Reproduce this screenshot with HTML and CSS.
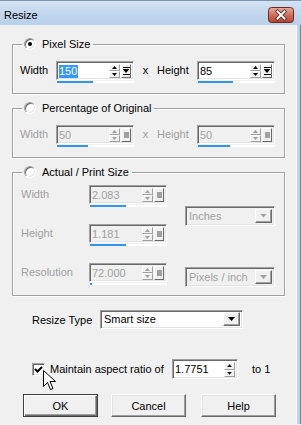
FILE: index.html
```html
<!DOCTYPE html>
<html>
<head>
  <meta charset="UTF-8">
  <title>Resize</title>
  <link rel="stylesheet" href="styles.css">
</head>
<body>
  <div class="window">
    <div class="titlebar">
      <span class="title">Resize</span>
      <span class="close-btn">
        <svg width="26" height="16" viewBox="0 0 26 16">
          <defs>
            <linearGradient id="closeGrad" x1="0" y1="0" x2="0" y2="1">
              <stop offset="0" stop-color="#e9a99c"/>
              <stop offset="0.5" stop-color="#d0705e"/>
              <stop offset="1" stop-color="#b8402c"/>
            </linearGradient>
          </defs>
          <rect x="0.5" y="0.5" width="25" height="15" rx="3" fill="url(#closeGrad)" stroke="#6b2a22"/>
          <path d="M9.5 4.5l7 7m0-7l-7 7" stroke="#4a2a26" stroke-width="3.6" stroke-linecap="square"/>
          <path d="M9.5 4.5l7 7m0-7l-7 7" stroke="#fff" stroke-width="2" stroke-linecap="square"/>
        </svg>
      </span>
    </div>

    <div class="client">
      <!-- Pixel size -->
      <div class="group">
        <div class="group-title"><span class="radio checked"></span><span>Pixel Size</span></div>
        <div class="size-row">
          <span class="lbl">Width</span>
          <div class="spin">
            <div class="spin-box">
              <span class="spin-text"><span class="sel">150</span></span>
              <span class="arrows"><span class="arrow up"></span><span class="arrow down"></span></span>
              <span class="spin-btn"><span class="jump"></span></span>
            </div>
            <div class="track"><div class="track-fill" style="width:36px"></div></div>
          </div>
          <span class="times">x</span>
          <span class="lbl lbl-h">Height</span>
          <div class="spin">
            <div class="spin-box">
              <span class="spin-text">85</span>
              <span class="arrows"><span class="arrow up"></span><span class="arrow down"></span></span>
              <span class="spin-btn"><span class="jump"></span></span>
            </div>
            <div class="track"><div class="track-fill" style="width:35px"></div></div>
          </div>
        </div>
      </div>

      <!-- Percentage -->
      <div class="group disabled">
        <div class="group-title"><span class="radio"></span><span class="enabled-text">Percentage of Original</span></div>
        <div class="size-row">
          <span class="lbl">Width</span>
          <div class="spin">
            <div class="spin-box">
              <span class="spin-text">50</span>
              <span class="arrows"><span class="arrow up"></span><span class="arrow down"></span></span>
              <span class="spin-btn"><span class="jump"></span></span>
            </div>
            <div class="track"><div class="track-fill" style="width:31px"></div></div>
          </div>
          <span class="times">x</span>
          <span class="lbl lbl-h">Height</span>
          <div class="spin">
            <div class="spin-box">
              <span class="spin-text">50</span>
              <span class="arrows"><span class="arrow up"></span><span class="arrow down"></span></span>
              <span class="spin-btn"><span class="jump"></span></span>
            </div>
            <div class="track"><div class="track-fill" style="width:32px"></div></div>
          </div>
        </div>
      </div>

      <!-- Actual / print size -->
      <div class="group disabled">
        <div class="group-title"><span class="radio"></span><span class="enabled-text">Actual / Print Size</span></div>
        <div class="print-grid">
          <span class="lbl">Width</span>
          <div class="spin">
            <div class="spin-box">
              <span class="spin-text">2.083</span>
              <span class="arrows"><span class="arrow up"></span><span class="arrow down"></span></span>
              <span class="spin-btn"><span class="jump"></span></span>
            </div>
            <div class="track"><div class="track-fill" style="width:36px"></div></div>
          </div>
          <div class="select unit-select">
            <span class="select-text">Inches</span>
            <span class="select-btn"><span class="tri"></span></span>
          </div>

          <span class="lbl">Height</span>
          <div class="spin">
            <div class="spin-box">
              <span class="spin-text">1.181</span>
              <span class="arrows"><span class="arrow up"></span><span class="arrow down"></span></span>
              <span class="spin-btn"><span class="jump"></span></span>
            </div>
            <div class="track"><div class="track-fill" style="width:36px"></div></div>
          </div>

          <span class="lbl">Resolution</span>
          <div class="spin">
            <div class="spin-box">
              <span class="spin-text">72.000</span>
              <span class="arrows"><span class="arrow up"></span><span class="arrow down"></span></span>
              <span class="spin-btn"><span class="jump"></span></span>
            </div>
            <div class="track"><div class="track-fill" style="width:2px"></div></div>
          </div>
          <div class="select res-select">
            <span class="select-text">Pixels / inch</span>
            <span class="select-btn"><span class="tri"></span></span>
          </div>
        </div>
      </div>

      <div class="type-row">
        <span class="type-lbl">Resize Type</span>
        <div class="select type-select">
          <span class="select-text">Smart size</span>
          <span class="select-btn"><span class="tri"></span></span>
        </div>
      </div>

      <div class="aspect-row">
        <span class="checkbox">
          <svg width="9" height="9" viewBox="0 0 9 9"><path d="M1 4l2.5 2.5L8 2" stroke="#000" stroke-width="2" fill="none"/></svg>
        </span>
        <span class="aspect-lbl">Maintain aspect ratio of</span>
        <div class="spin-box ratio-box">
          <span class="spin-text">1.7751</span>
          <span class="arrows"><span class="arrow up"></span><span class="arrow down"></span></span>
        </div>
        <span class="to-one">to 1</span>
      </div>

      <div class="button-row">
        <button class="btn default">OK</button>
        <button class="btn">Cancel</button>
        <button class="btn help">Help</button>
      </div>
    </div>

    <svg class="cursor" width="13" height="21" viewBox="0 0 13 21">
      <path d="M0.5 0.5v16l4-4 3 7 2.5-1-3-7h5.5z" fill="#fff" stroke="#000" stroke-linejoin="miter"/>
    </svg>
  </div>
</body>
</html>
```

FILE: styles.css
```css
* {
  box-sizing: border-box;
}

body {
  margin: 0;
  padding: 0;
  background: #f0f0f0;
  font-family: 'Liberation Sans', Arial, sans-serif;
  font-size: 11px;
  color: #000;
}

.window {
  width: 301px;
  height: 425px;
  position: relative;
  overflow: hidden;
  background: #f0f0f0;
}

/* Title bar */
.titlebar {
  height: 25px;
  display: flex;
  align-items: flex-start;
  justify-content: space-between;
  padding: 0 7px 0 4px;
  border-top: 1px solid #7f93aa;
  background: linear-gradient(180deg, #d3e3f4 0%, #c0d5ec 60%, #b9d0ea 100%);
}

.title {
  font-size: 11px;
  line-height: 12px;
  margin-top: 8px;
}

.close-btn {
  display: flex;
  margin-top: 6px;
}

/* Client area */
.client {
  height: 399px;
  padding: 19px 12px 0 12px;
  border-right: 4px solid #bed3ea;
  box-shadow: inset -1px 0 0 #fff;
  position: relative;
}

.client::after {
  content: '';
  position: absolute;
  top: 0;
  right: -4px;
  width: 1px;
  height: 100%;
  background: #6f8397;
}

/* Group boxes */
.group {
  border: 1px solid #a0a0a0;
  box-shadow: 1px 1px 0 #fff, inset 1px 1px 0 #fff;
  padding: 0 0 10px 7px;
  margin-bottom: 14px;
}

.group-title {
  display: flex;
  align-items: center;
  gap: 6px;
  width: max-content;
  height: 14px;
  margin: -8px 0 0 2px;
  padding: 0 3px 0 2px;
  background: #f0f0f0;
}

.radio {
  width: 12px;
  height: 12px;
  border-radius: 50%;
  background: #fff;
  border: 1px solid;
  border-color: #a0a0a0 #fff #fff #a0a0a0;
  box-shadow: inset 1px 1px 0 #696969, inset -1px -1px 0 #e3e3e3;
  display: flex;
  align-items: center;
  justify-content: center;
}

.radio.checked::after {
  content: '';
  width: 4px;
  height: 4px;
  border-radius: 50%;
  background: #000;
}

.size-row {
  display: flex;
  align-items: flex-start;
  margin-top: 10px;
}

.lbl {
  width: 36px;
  line-height: 19px;
}

.lbl-h {
  width: 40px;
}

.times {
  width: 23px;
  text-align: center;
  line-height: 19px;
}

.disabled .lbl,
.disabled .times,
.disabled .spin-text {
  color: #a0a0a0;
}

.disabled .spin-text,
.disabled .select {
  background: #f0f0f0;
}

/* Spin edit */
.spin {
  width: 78px;
  display: flex;
  flex-direction: column;
}

.spin-box {
  height: 19px;
  display: flex;
  align-items: stretch;
  border: 1px solid;
  border-color: #a0a0a0 #fff #fff #a0a0a0;
  box-shadow: inset 1px 1px 0 #696969, inset -1px -1px 0 #e3e3e3;
  padding: 2px 2px 1px 2px;
  background: #fff;
}

.disabled .spin-box {
  background: #f0f0f0;
}

.spin-text {
  flex: 1;
  line-height: 14px;
  padding-left: 0;
  background: #fff;
}

.sel {
  background: #3399ff;
  color: #fff;
  padding: 0 1px 1px 0;
}

.arrows {
  width: 11px;
  display: flex;
  flex-direction: column;
}

.arrow {
  flex: 1;
  display: flex;
  align-items: center;
  justify-content: center;
  border: 1px solid;
  border-color: #fff #a0a0a0 #a0a0a0 #fff;
  background: #f0f0f0;
}

.arrow::after {
  content: '';
  width: 5px;
  height: 3px;
  background: #000;
  clip-path: polygon(50% 0, 100% 100%, 0 100%);
}

.arrow.down::after {
  clip-path: polygon(0 0, 100% 0, 50% 100%);
}

.disabled .arrow::after {
  background: #a0a0a0;
}

.spin-btn {
  width: 10px;
  margin-left: 1px;
  display: flex;
  align-items: center;
  justify-content: center;
  border: 1px solid;
  border-color: #fff #696969 #696969 #fff;
  background: #f0f0f0;
}

.jump {
  width: 7px;
  height: 8px;
  background:
    linear-gradient(#000, #000) top / 7px 1px no-repeat,
    linear-gradient(#000, #000) bottom / 7px 1px no-repeat;
  position: relative;
}

.jump::after {
  content: '';
  position: absolute;
  left: 0;
  top: 2px;
  width: 7px;
  height: 4px;
  background: #000;
  clip-path: polygon(0 0, 100% 0, 50% 100%);
}

.disabled .jump {
  width: 5px;
  height: 6px;
  background: #a0a0a0;
}

.disabled .jump::after {
  display: none;
}

.track {
  height: 2px;
  margin: 1px 0 0 1px;
  background: #fff;
}

.track-fill {
  height: 2px;
  background: #3396ec;
}

/* Print size grid */
.print-grid {
  display: grid;
  grid-template-columns: 68px 96px 90px;
  grid-auto-rows: 22px;
  row-gap: 17px;
  margin-top: 6px;
  padding-left: 1px;
}

.print-grid .lbl {
  width: auto;
}

.unit-select {
  grid-column: 3;
  grid-row: 1 / span 2;
  align-self: center;
}

.res-select {
  grid-column: 3;
  margin-top: 4px;
}

/* Combo box */
.select {
  height: 20px;
  display: flex;
  border: 1px solid;
  border-color: #a0a0a0 #fff #fff #a0a0a0;
  box-shadow: inset 1px 1px 0 #696969, inset -1px -1px 0 #e3e3e3;
  padding: 2px;
  background: #fff;
}

.select-text {
  flex: 1;
  line-height: 15px;
  padding-left: 1px;
}

.disabled .select-text {
  color: #a0a0a0;
}

.select-btn {
  width: 17px;
  display: flex;
  align-items: center;
  justify-content: center;
  border: 1px solid;
  border-color: #fff #696969 #696969 #fff;
  box-shadow: inset -1px -1px 0 #a0a0a0;
  background: #f0f0f0;
}

.tri {
  width: 7px;
  height: 4px;
  background: #000;
  clip-path: polygon(0 0, 100% 0, 50% 100%);
}

.disabled .tri {
  background: #a0a0a0;
}

/* Resize type */
.type-row {
  display: flex;
  align-items: center;
  margin: 0 0 0 20px;
}

.type-lbl {
  width: 68px;
}

.type-select {
  width: 143px;
  height: 19px;
  padding: 1px 2px 2px 2px;
}

/* Aspect ratio */
.aspect-row {
  display: flex;
  align-items: center;
  margin: 30px 0 0 20px;
}

.checkbox {
  width: 13px;
  height: 13px;
  display: flex;
  align-items: center;
  justify-content: center;
  background: #fff;
  border: 1px solid;
  border-color: #a0a0a0 #fff #fff #a0a0a0;
  box-shadow: inset 1px 1px 0 #696969, inset -1px -1px 0 #e3e3e3;
}

.aspect-lbl {
  margin-left: 5px;
  width: 122px;
}

.ratio-box {
  width: 66px;
  height: 20px;
}

.to-one {
  margin-left: 14px;
}

/* Buttons */
.button-row {
  display: flex;
  gap: 13px;
  margin: 15px 0 0 11px;
}

.btn {
  width: 75px;
  height: 23px;
  padding: 0;
  font-family: 'Liberation Sans', Arial, sans-serif;
  font-size: 11px;
  color: #000;
  background: #f0f0f0;
  border: 1px solid;
  border-color: #fff #696969 #696969 #fff;
  box-shadow: inset -1px -1px 0 #a0a0a0, inset 1px 1px 0 #e3e3e3;
}

.btn.default {
  border: 1px solid #404040;
  box-shadow: inset 1px 1px 0 #fff, inset -1px -1px 0 #696969, inset -2px -2px 0 #a0a0a0;
}

.btn.help {
  margin-left: 2px;
}

/* Mouse pointer over the checkbox */
.cursor {
  position: absolute;
  left: 43px;
  top: 370px;
}
```
